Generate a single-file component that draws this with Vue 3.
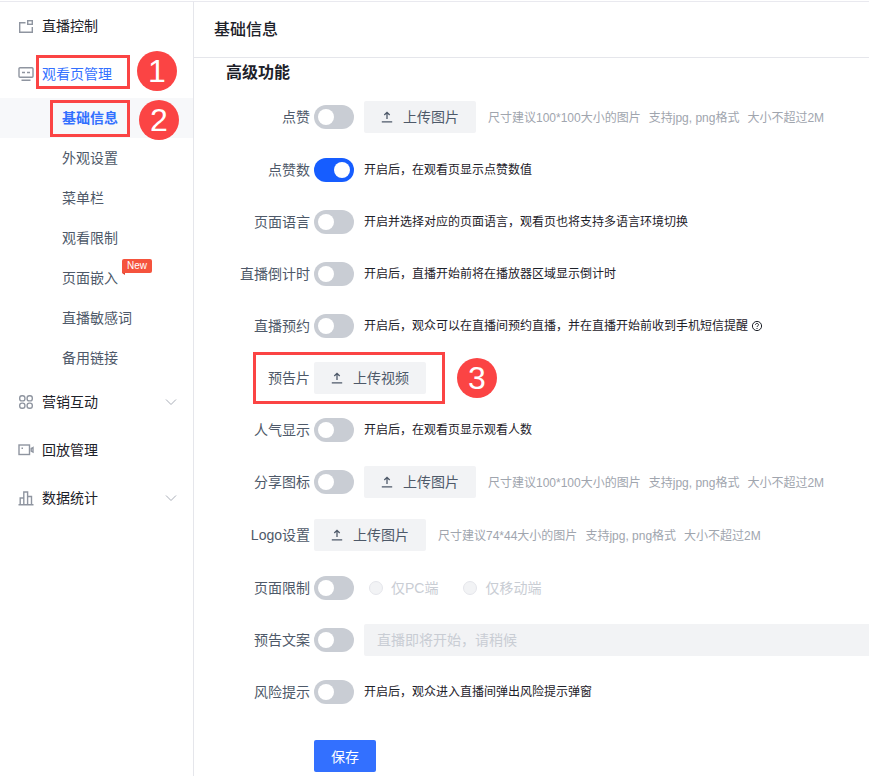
<script setup>
const subs = [
  { t: '基础信息', active: true },
  { t: '外观设置' },
  { t: '菜单栏' },
  { t: '观看限制' },
  { t: '页面嵌入', isNew: true },
  { t: '直播敏感词' },
  { t: '备用链接' },
]
const imgHint = ['尺寸建议100*100大小的图片', '支持jpg, png格式', '大小不超过2M']
const logoHint = ['尺寸建议74*44大小的图片', '支持jpg, png格式', '大小不超过2M']
</script>

<template>
  <div class="page">
    <aside class="side">
      <div class="nav">
        <svg class="ico" viewBox="0 0 16 16" fill="none" stroke="#8f95a0" stroke-width="1.4"><path d="M7.500 4.700H1.700v9.600h12.600V9"/><rect x="9.700" y="2.700" width="4.600" height="3.600"/></svg>
        <span class="tx">直播控制</span>
      </div>
      <div class="nav blue">
        <svg class="ico" viewBox="0 0 16 16" fill="none" stroke="#8f95a0" stroke-width="1.4"><rect x="1" y="1.700" width="14" height="9.600" rx="1"/><path d="M4 6.500h3M9 6.500h3M3.500 14.300h9"/></svg>
        <span class="tx">观看页管理</span>
      </div>
      <div v-for="s in subs" :key="s.t" class="sub" :class="{ on: s.active }">
        <span class="subt tx">{{ s.t }}<i v-if="s.isNew" class="new">New</i></span>
      </div>
      <div class="nav">
        <svg class="ico" viewBox="0 0 16 16" fill="none" stroke="#8f95a0" stroke-width="1.4"><rect x="1.700" y="1.700" width="5.200" height="5.200" rx="2.200"/><rect x="9.100" y="1.700" width="5.200" height="5.200" rx="2.200"/><rect x="1.700" y="9.100" width="5.200" height="5.200" rx="2.200"/><rect x="9.100" y="9.100" width="5.200" height="5.200" rx="2.200"/></svg>
        <span class="tx">营销互动</span>
        <svg class="chev" viewBox="0 0 12 12" fill="none" stroke="#a9aeb8" stroke-width="1"><path d="M1 3.500l5 5 5-5"/></svg>
      </div>
      <div class="nav">
        <svg class="ico" viewBox="0 0 16 16" fill="none" stroke="#8f95a0" stroke-width="1.4"><rect x="1" y="3" width="10.500" height="9.500"/><path d="M15 5.500l-1.800 1v2.500l1.800 1z"/><path d="M3.500 6.200h1.500" stroke-width="1.600"/></svg>
        <span class="tx">回放管理</span>
      </div>
      <div class="nav">
        <svg class="ico" viewBox="0 0 16 16" fill="none" stroke="#8f95a0" stroke-width="1.4"><path d="M.5 14.700h15M2.200 14.700V8h3.600v6.700M5.800 14.700V2h3.800v12.700M9.600 14.700V6.500h3.900v8.200"/></svg>
        <span class="tx">数据统计</span>
        <svg class="chev" viewBox="0 0 12 12" fill="none" stroke="#a9aeb8" stroke-width="1"><path d="M1 3.500l5 5 5-5"/></svg>
      </div>
    </aside>

    <main class="main">
      <header class="head">基础信息</header>
      <section class="body">
        <h2 class="title">高级功能</h2>

        <div class="row tall">
          <label class="lab">点赞</label><i class="sw"></i>
          <button class="up gap">
            <svg class="upi" viewBox="0 0 12 12" fill="none" stroke="#4e5969" stroke-width="1.300"><path d="M6 8V1.500M3.300 4L6 1.300 8.700 4M.8 10.800h10.400"/></svg><span class="tx">上传图片</span>
          </button>
          <span class="hint grey"><span v-for="h in imgHint" :key="h">{{ h }}</span></span>
        </div>
        <div class="row">
          <label class="lab">点赞数</label><i class="sw on"></i>
          <span class="hint">开启后，在观看页显示点赞数值</span>
        </div>
        <div class="row">
          <label class="lab">页面语言</label><i class="sw"></i>
          <span class="hint">开启并选择对应的页面语言，观看页也将支持多语言环境切换</span>
        </div>
        <div class="row">
          <label class="lab">直播倒计时</label><i class="sw"></i>
          <span class="hint">开启后，直播开始前将在播放器区域显示倒计时</span>
        </div>
        <div class="row">
          <label class="lab">直播预约</label><i class="sw"></i>
          <span class="hint">开启后，观众可以在直播间预约直播，并在直播开始前收到手机短信提醒</span>
          <svg class="qm" viewBox="0 0 12 12" fill="none" stroke="#1d2129"><circle cx="6" cy="6" r="4.600"/><path d="M4.500 4.900c0-2 3-2 3 0 0 1-1.500 1-1.500 2.100M6 8v1"/></svg>
        </div>
        <div class="row">
          <label class="lab">预告片</label>
          <button class="up">
            <svg class="upi" viewBox="0 0 12 12" fill="none" stroke="#4e5969" stroke-width="1.300"><path d="M6 8V1.500M3.300 4L6 1.300 8.700 4M.8 10.800h10.400"/></svg><span class="tx">上传视频</span>
          </button>
        </div>
        <div class="row">
          <label class="lab">人气显示</label><i class="sw"></i>
          <span class="hint">开启后，在观看页显示观看人数</span>
        </div>
        <div class="row tall">
          <label class="lab">分享图标</label><i class="sw"></i>
          <button class="up gap">
            <svg class="upi" viewBox="0 0 12 12" fill="none" stroke="#4e5969" stroke-width="1.300"><path d="M6 8V1.500M3.300 4L6 1.300 8.700 4M.8 10.800h10.400"/></svg><span class="tx">上传图片</span>
          </button>
          <span class="hint grey"><span v-for="h in imgHint" :key="h">{{ h }}</span></span>
        </div>
        <div class="row tall">
          <label class="lab">Logo设置</label>
          <button class="up">
            <svg class="upi" viewBox="0 0 12 12" fill="none" stroke="#4e5969" stroke-width="1.300"><path d="M6 8V1.500M3.300 4L6 1.300 8.700 4M.8 10.800h10.400"/></svg><span class="tx">上传图片</span>
          </button>
          <span class="hint grey logo"><span v-for="h in logoHint" :key="h">{{ h }}</span></span>
        </div>
        <div class="row">
          <label class="lab">页面限制</label><i class="sw"></i>
          <span class="radio"><i></i><span class="tx">仅PC端</span></span>
          <span class="radio second"><i></i><span class="tx">仅移动端</span></span>
        </div>
        <div class="row">
          <label class="lab">预告文案</label><i class="sw"></i>
          <div class="inp">直播即将开始，请稍候</div>
        </div>
        <div class="row">
          <label class="lab">风险提示</label><i class="sw"></i>
          <span class="hint">开启后，观众进入直播间弹出风险提示弹窗</span>
        </div>
        <button class="save">保存</button>
      </section>
    </main>

    <i class="box b1"></i>
    <i class="box b2"></i>
    <i class="box b3"></i>
    <b class="num n1">1</b>
    <b class="num n2">2</b>
    <b class="num n3">3</b>
  </div>
</template>

<style>
html, body { margin: 0; overflow: hidden; background: #fff; }
</style>

<style scoped>
.page {
  position: relative;
  display: flex;
  width: 869px;
  height: 776px;
  overflow: hidden;
  box-sizing: border-box;
  padding-top: 1px;
  background: #fff;
  font-family: "Liberation Sans", "Noto Sans CJK SC", sans-serif;
  font-size: 14px;
  color: #4e5969;
}
.tx { padding-bottom: 2px; }
.side {
  flex: 0 0 194px;
  box-sizing: border-box;
  border-top: 1px solid #e9e9ef;
  border-right: 1px solid #e5e6eb;
}
.nav {
  display: flex;
  align-items: center;
  height: 48px;
  padding-left: 18px;
  color: #1d2129;
  position: relative;
}
.nav.blue { color: #3370ff; }
.ico { width: 16px; height: 16px; margin-right: 8px; flex: none; }
.chev { position: absolute; left: 165px; top: 18px; width: 12px; height: 12px; }
.sub {
  height: 40px;
  display: flex;
  align-items: center;
  padding-left: 62px;
  color: #4e5969;
}
.sub.on { background: #f7f8fa; color: #3370ff; font-weight: 700; }
.subt { position: relative; }
.new {
  position: absolute;
  left: 60px;
  top: -8px;
  width: 30px;
  height: 14px;
  border-radius: 2px 2px 2px 0;
  background: #f5533d;
  color: #fff;
  font-style: normal;
  font-size: 10px;
  line-height: 14px;
  text-align: center;
}
.new::after {
  content: "";
  position: absolute;
  left: 0;
  top: 14px;
  border-top: 2px solid #d9432f;
  border-left: 3px solid transparent;
}
.main { flex: 1; min-width: 0; border-top: 1px solid #e9e9ef; }
.head {
  height: 56px;
  box-sizing: border-box;
  border-bottom: 1px solid #e5e6eb;
  padding-left: 20px;
  font-size: 16px;
  line-height: 56px;
  color: #1d2129;
  font-weight: 500;
}
.title {
  margin: 2px 0 15px 32px;
  height: 26px;
  font-size: 16px;
  line-height: 26px;
  font-weight: 700;
  color: #1d2129;
}
.row {
  display: flex;
  align-items: center;
  height: 32px;
  margin-bottom: 20px;
}
.row.tall { margin-bottom: 21px; }
.lab {
  flex: 0 0 120px;
  text-align: right;
  padding: 0 4px 2px 0;
  box-sizing: border-box;
  color: #4e5969;
}
.sw {
  position: relative;
  flex: none;
  width: 40px;
  height: 24px;
  border-radius: 12px;
  background: #c9cdd4;
}
.sw::after {
  content: "";
  position: absolute;
  left: 4px;
  top: 4px;
  width: 16px;
  height: 16px;
  border-radius: 50%;
  background: #fff;
}
.sw.on { background: #165dff; }
.sw.on::after { left: 20px; }
.up {
  flex: none;
  display: flex;
  align-items: center;
  justify-content: center;
  width: 112px;
  height: 32px;
  border: 0;
  border-radius: 2px;
  padding: 0;
  background: #f2f3f5;
  color: #4e5969;
  font: inherit;
}
.up.gap { margin-left: 10px; }
.upi { width: 12px; height: 12px; margin-right: 10px; }
.hint {
  margin-left: 10px;
  padding-bottom: 3px;
  font-size: 12px;
  color: #1d2129;
  white-space: nowrap;
}
.hint.grey { margin-left: 12px; padding-bottom: 1px; color: #a0a5ae; display: flex; gap: 8px; }
.qm { width: 12px; height: 12px; margin-left: 3px; }
.radio {
  display: flex;
  align-items: center;
  color: #c9cdd4;
  white-space: nowrap;
  margin-left: 15px;
}
.radio.second { margin-left: 25px; }
.radio i {
  box-sizing: border-box;
  width: 14px;
  height: 14px;
  border: 1px solid #e5e6eb;
  border-radius: 50%;
  background: #f2f3f5;
  margin-right: 8px;
}
.inp {
  flex: 1;
  margin-left: 10px;
  height: 32px;
  line-height: 32px;
  padding-left: 13px;
  border-radius: 2px 0 0 2px;
  background: #f2f3f5;
  color: #c9cdd4;
}
.save {
  display: block;
  width: 62px;
  height: 32px;
  margin: 32px 0 0 120px;
  border: 0;
  border-radius: 2px;
  padding: 0;
  background: #3370ff;
  color: #fff;
  font: inherit;
}
.box {
  position: absolute;
  box-sizing: border-box;
  border: 3px solid #fb4444;
}
.b1 { left: 36px; top: 55px; width: 94px; height: 34px; }
.b2 { left: 50px; top: 100px; width: 80px; height: 37px; }
.b3 { left: 253px; top: 352px; width: 192px; height: 52px; }
.num {
  position: absolute;
  width: 40px;
  height: 40px;
  border-radius: 50%;
  background: #fb4444;
  color: #fff;
  font: 400 32px/40px "Liberation Sans", sans-serif;
  text-align: center;
}
.n1 { left: 137px; top: 51px; }
.n2 { left: 139px; top: 100px; }
.n3 { left: 457px; top: 358px; }
</style>
